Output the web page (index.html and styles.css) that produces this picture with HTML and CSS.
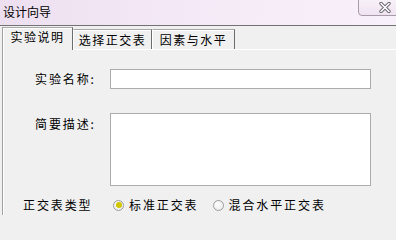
FILE: index.html
```html
<!DOCTYPE html>
<html lang="zh-CN">
<head>
<meta charset="utf-8">
<title>设计向导</title>
<link rel="stylesheet" href="styles.css">
</head>
<body>
<div class="window">
  <div class="titlebar">
    <span class="title">设计向导</span>
    <div class="close">
      <svg width="12" height="11" viewBox="0 0 12 11">
        <path d="M2 1.5 L10 9.5 M10 1.5 L2 9.5" stroke="#6a6470" stroke-width="3.4" stroke-linecap="round" fill="none"/>
        <path d="M2 1.5 L10 9.5 M10 1.5 L2 9.5" stroke="#ffffff" stroke-width="1.6" stroke-linecap="round" fill="none"/>
      </svg>
    </div>
  </div>
  <div class="tabs">
    <div class="tab active">实验说明</div>
    <div class="tab t2">选择正交表</div>
    <div class="tab t3">因素与水平</div>
  </div>
  <div class="panel">
    <div class="row row-name">
      <label class="label label-form">实验名称:</label>
      <input class="field" type="text">
    </div>
    <div class="row row-desc">
      <label class="label label-form label-top">简要描述:</label>
      <textarea class="area"></textarea>
    </div>
    <div class="row row-type">
      <span class="label label-type">正交表类型</span>
      <span class="radio checked"><span class="dot"></span></span>
      <span class="opt">标准正交表</span>
      <span class="radio r2"></span>
      <span class="opt">混合水平正交表</span>
    </div>
  </div>
</div>
</body>
</html>
```

FILE: styles.css
```css
html, body {
  margin: 0;
  padding: 0;
  width: 396px;
  height: 215px;
  overflow: hidden;
  background: #f0f0f0;
  font-family: "Noto Sans CJK SC", "Noto Sans", sans-serif;
  font-size: 12px;
  color: #000;
}

.window {
  display: flex;
  flex-direction: column;
  height: 215px;
}

.titlebar {
  position: relative;
  height: 25px;
  border-bottom: 1px solid #727272;
  background: linear-gradient(100deg, #eddff0 0%, #f5ebf7 55%, #f8f0fa 100%);
  display: flex;
  align-items: flex-start;
}

.title {
  margin: 4px 0 0 3px;
  line-height: 16px;
  font-size: 12px;
}

.close {
  position: absolute;
  top: -1px;
  right: -6px;
  width: 44px;
  height: 17px;
  border: 1px solid #a99aa8;
  border-radius: 0 0 0 4px;
  background: linear-gradient(#f8f1f9, #efe3f1);
  display: flex;
  align-items: center;
  padding-left: 20px;
  box-sizing: border-box;
}

.tabs {
  display: flex;
  align-items: flex-end;
  height: 22px;
  margin-top: 1px;
  padding-left: 2px;
}

.tab {
  box-sizing: border-box;
  height: 20px;
  text-align: center;
  letter-spacing: 1.5px;
  line-height: 19px;
  border-top: 1px solid #a8a8a8;
  border-left: 1px solid #ffffff;
  border-right: 1px solid #6c6c6c;
  box-shadow: inset 0 1px 0 #ffffff;
  background: #f0f0f0;
}

.tab.active {
  width: 71px;
  height: 23px;
  line-height: 17px;
  margin-bottom: -1px;
  position: relative;
  z-index: 1;
  border-left: 1px solid #a0a0a0;
  box-shadow: inset 1px 1px 0 #ffffff;
}

.tab.t2 {
  width: 79px;
}

.tab.t3 {
  width: 83px;
}

.panel {
  flex: 1;
  margin-left: 2px;
  border-top: 1px solid #ffffff;
  border-left: 1px solid #a0a0a0;
  box-shadow: inset 1px 0 0 #ffffff;
  display: flex;
  flex-direction: column;
}

.row {
  display: flex;
  align-items: center;
}

.label {
  letter-spacing: 1.9px;
  line-height: 14px;
  flex-shrink: 0;
  white-space: nowrap;
}

.row-name {
  margin-top: 19px;
}

.label-form {
  padding-left: 32px;
  width: 107px;
  box-sizing: border-box;
}

.field {
  width: 261px;
  height: 20px;
  box-sizing: border-box;
  border: 1px solid #acacac;
  background: #fff;
  margin: 0;
  padding: 0;
  outline: none;
}

.row-desc {
  margin-top: 24px;
  align-items: flex-start;
}

.label-top {
  margin-top: 4px;
}

.area {
  display: block;
  width: 261px;
  height: 73px;
  box-sizing: border-box;
  border: 1px solid #acacac;
  background: #fff;
  margin: 0;
  padding: 0;
  resize: none;
  outline: none;
}

.row-type {
  margin-top: 12px;
  height: 14px;
}

.label-type {
  padding-left: 20px;
  width: 110px;
  box-sizing: border-box;
}

.radio {
  box-sizing: border-box;
  flex-shrink: 0;
  width: 11px;
  height: 11px;
  border-radius: 50%;
  border: 1px solid #9c9c9c;
  background: radial-gradient(circle at 40% 40%, #ffffff, #e6e6e6);
  display: flex;
  align-items: center;
  justify-content: center;
  margin-right: 5px;
}

.radio .dot {
  width: 6px;
  height: 6px;
  border-radius: 50%;
  background: #d2c600;
}

.r2 {
  margin-left: 14px;
}

.opt {
  letter-spacing: 1.9px;
  line-height: 14px;
  white-space: nowrap;
}
```
